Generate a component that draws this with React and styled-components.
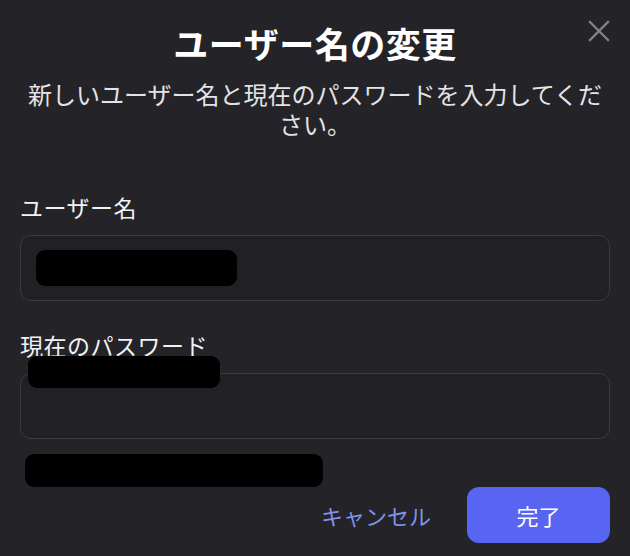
import styled, { createGlobalStyle } from "styled-components";

const GlobalStyle = createGlobalStyle`
	html, body {
		margin: 0;
		padding: 0;
		background: #232328;
	}
	* {
		box-sizing: border-box;
	}
`;

export default function App() {
	return (
		<>
			<GlobalStyle />
			<Modal>
				<CloseButton aria-label="閉じる">
					<svg width="22" height="22" viewBox="0 0 22 22">
						<path
							d="M2 2 L20 20 M20 2 L2 20"
							stroke="currentColor"
							strokeWidth="2.4"
							strokeLinecap="square"
						/>
					</svg>
				</CloseButton>

				<Title>ユーザー名の変更</Title>
				<Subtitle>新しいユーザー名と現在のパスワードを入力してください。</Subtitle>

				<Form>
					<Field>
						<Label>ユーザー名</Label>
						<InputBox>
							<Redacted width={201} height={36} />
						</InputBox>
					</Field>

					<Field top={29}>
						<Label>現在のパスワード</Label>
						<InputBox />
						<Overlay>
							<Redacted width={192} height={32} />
						</Overlay>
					</Field>

					<HintRow>
						<Redacted width={298} height={33} />
					</HintRow>
				</Form>

				<Footer>
					<CancelButton>キャンセル</CancelButton>
					<SubmitButton>完了</SubmitButton>
				</Footer>
			</Modal>
		</>
	);
}

const Modal = styled.div`
	position: relative;
	width: 630px;
	height: 556px;
	padding: 20px 20px 13px 20px;
	background: #232328;
	font-family: "Noto Sans CJK JP", "Noto Sans", sans-serif;
	display: flex;
	flex-direction: column;
`;

const CloseButton = styled.button`
	position: absolute;
	top: 20px;
	right: 20px;
	width: 22px;
	height: 22px;
	padding: 0;
	border: none;
	background: transparent;
	color: #818187;
	display: flex;
	cursor: pointer;
`;

const Title = styled.h2`
	margin: 0;
	font-size: 35px;
	font-weight: 700;
	line-height: 46px;
	letter-spacing: 0.5px;
	text-align: center;
	color: #ffffff;
`;

const Subtitle = styled.p`
	margin: 13px 0 0 0;
	font-size: 24px;
	font-weight: 400;
	line-height: 30px;
	text-align: center;
	color: #e3e3e6;
`;

const Form = styled.div`
	margin-top: 53px;
	display: flex;
	flex-direction: column;
`;

const Field = styled.div`
	position: relative;
	margin-top: ${(p) => p.top || 0}px;
	display: flex;
	flex-direction: column;
	gap: 13px;
`;

const Label = styled.label`
	font-size: 23px;
	line-height: 30px;
	letter-spacing: 0.5px;
	color: #f2f2f4;
`;

const InputBox = styled.div`
	height: 66px;
	padding: 0 15px;
	border: 1px solid #3a3a40;
	border-radius: 11px;
	background: #212125;
	display: flex;
	align-items: center;
`;

const Overlay = styled.div`
	position: absolute;
	top: 26px;
	left: 8px;
`;

const Redacted = styled.div`
	width: ${(p) => p.width}px;
	height: ${(p) => p.height}px;
	border-radius: 9px;
	background: #000000;
`;

const HintRow = styled.div`
	margin-top: 15px;
	padding-left: 5px;
`;

const Footer = styled.div`
	margin-top: 0;
	display: flex;
	justify-content: flex-end;
	align-items: center;
	gap: 36px;
`;

const CancelButton = styled.button`
	padding: 0;
	border: none;
	background: transparent;
	font-family: inherit;
	font-size: 22px;
	line-height: 30px;
	color: #8192ea;
	cursor: pointer;
`;

const SubmitButton = styled.button`
	width: 143px;
	height: 56px;
	border: none;
	border-radius: 12px;
	background: #5865f2;
	font-family: inherit;
	font-size: 22px;
	color: #ffffff;
	cursor: pointer;
`;
